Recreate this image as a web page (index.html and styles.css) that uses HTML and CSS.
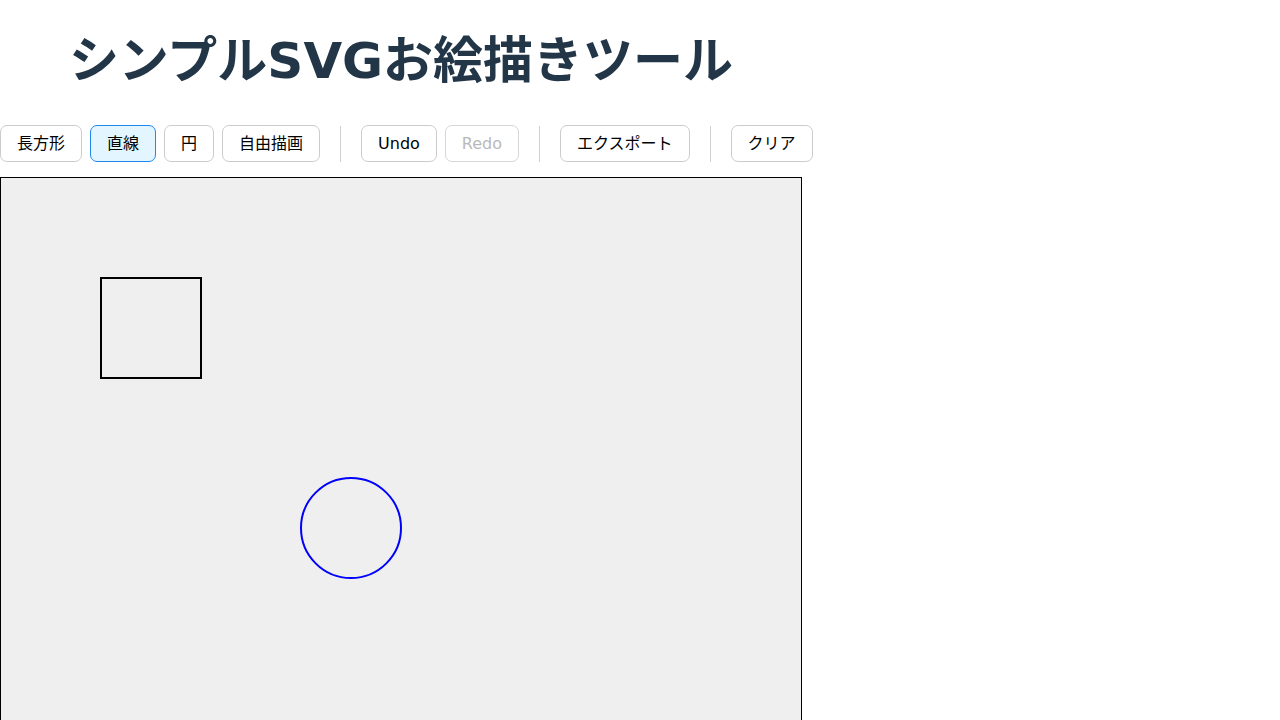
FILE: index.html
```html
<!DOCTYPE html>
<html lang="ja">
<head>
<meta charset="utf-8">
<title>シンプルSVGお絵描きツール</title>
<link rel="stylesheet" href="styles.css">
</head>
<body>
<div class="app">
  <h1 class="title">シンプルSVGお絵描きツール</h1>
  <div class="toolbar">
    <div class="group">
      <button class="btn">長方形</button>
      <button class="btn active">直線</button>
      <button class="btn">円</button>
      <button class="btn">自由描画</button>
    </div>
    <span class="sep"></span>
    <div class="group">
      <button class="btn">Undo</button>
      <button class="btn" disabled>Redo</button>
    </div>
    <span class="sep"></span>
    <div class="group">
      <button class="btn">エクスポート</button>
    </div>
    <span class="sep"></span>
    <div class="group">
      <button class="btn">クリア</button>
    </div>
  </div>
  <svg class="canvas" width="800" height="600" viewBox="0 0 800 600">
    <rect x="100" y="100" width="100" height="100" fill="none" stroke="#000" stroke-width="2"/>
    <circle cx="350" cy="350" r="50" fill="none" stroke="#0000ff" stroke-width="2"/>
  </svg>
</div>
</body>
</html>
```
FILE: styles.css
```css
html, body {
  margin: 0;
  padding: 0;
  background: #ffffff;
}

body {
  font-family: "DejaVu Sans", "Noto Sans CJK JP", sans-serif;
}

.app {
  width: 802px;
}

.title {
  margin: 0;
  padding-top: 33px;
  height: 56px;
  line-height: 56px;
  font-size: 50px;
  font-weight: bold;
  color: #233648;
  text-align: center;
  white-space: nowrap;
}

.toolbar {
  display: flex;
  align-items: center;
  width: max-content;
  margin: 36px auto 15px;
}

.group {
  display: flex;
  gap: 8px;
}

.sep {
  width: 1px;
  height: 36px;
  background: #d0d0d0;
  margin: 0 20px;
}

.btn {
  font-family: "DejaVu Sans", "Noto Sans CJK JP", sans-serif;
  font-size: 16px;
  line-height: 21px;
  padding: 7px 16px;
  border: 1px solid #cccccc;
  border-radius: 7px;
  background: #ffffff;
  color: #000000;
  white-space: nowrap;
}

.btn.active {
  background: #e3f5ff;
  border-color: #1e88f0;
}

.btn:disabled {
  color: #b9b9b9;
  border-color: #d6d6d6;
}

.canvas {
  display: block;
  background: #efefef;
  border: 1px solid #000000;
}
```
